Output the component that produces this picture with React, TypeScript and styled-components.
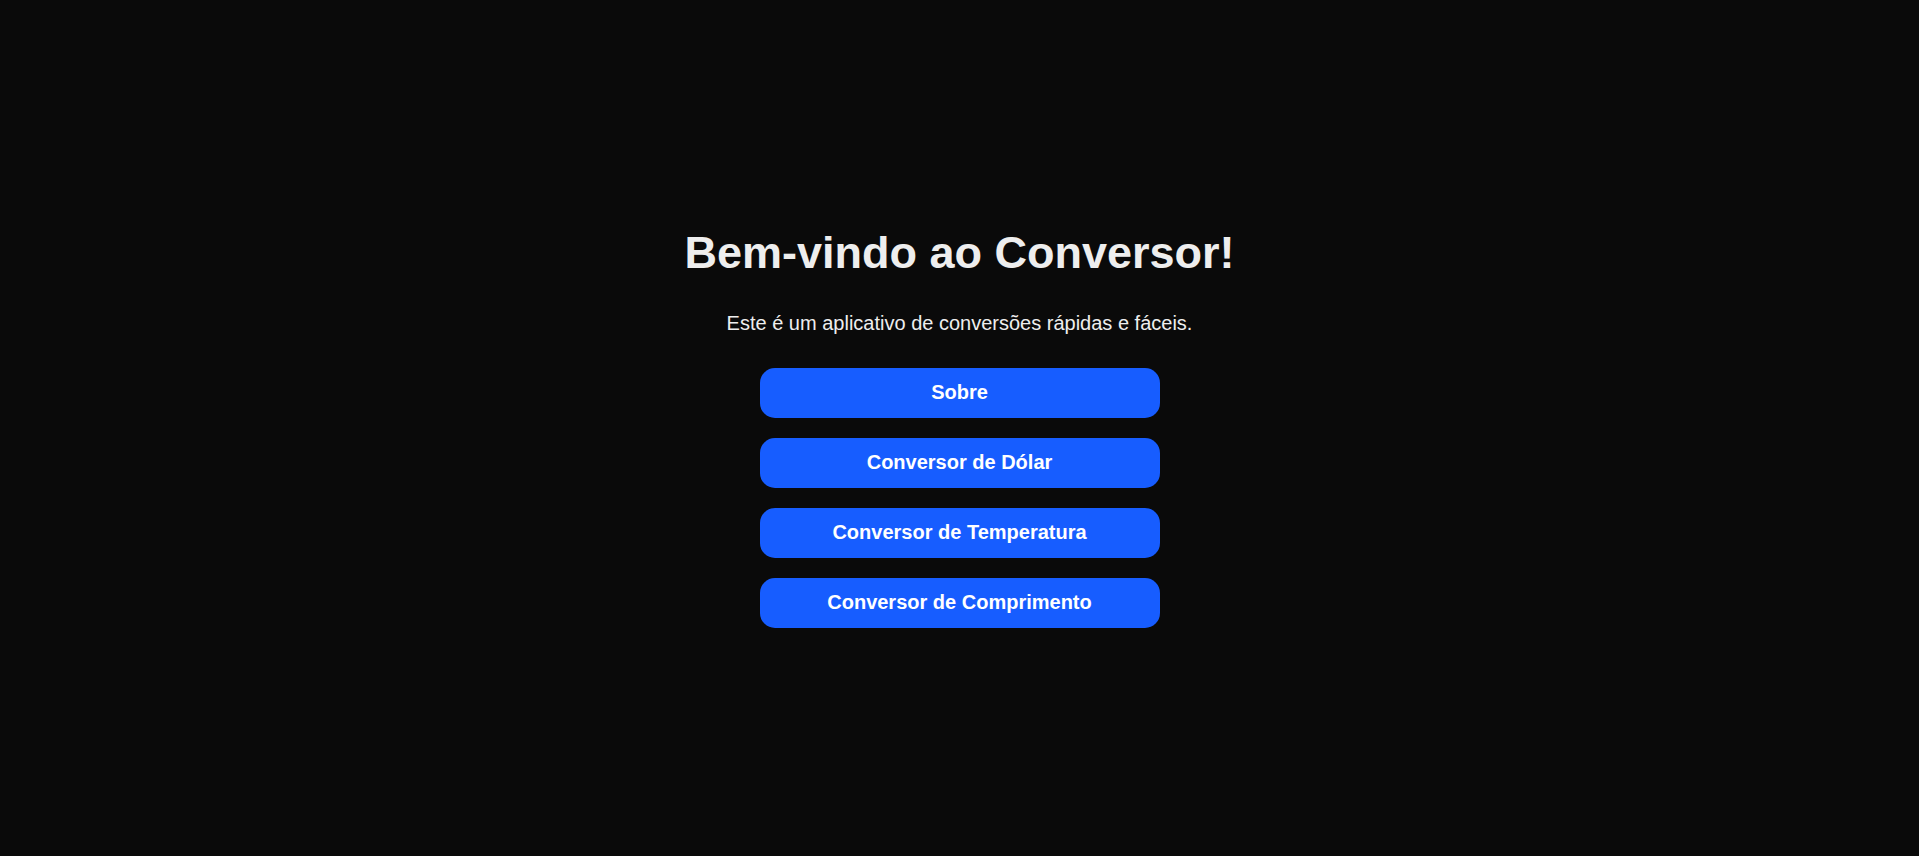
import React from "react";
import styled, { createGlobalStyle } from "styled-components";

const GlobalStyle = createGlobalStyle`
  body {
    margin: 0;
    background: #0a0a0a;
    font-family: "Liberation Sans", Arial, sans-serif;
  }
`;

const Page = styled.main`
  min-height: 100vh;
  box-sizing: border-box;
  padding-bottom: 2px;
  display: flex;
  flex-direction: column;
  align-items: center;
  justify-content: center;
  color: #eeeeee;
  text-align: center;
`;

const Title = styled.h1`
  font-size: 45px;
  font-weight: 700;
  margin: 0 0 33px;
`;

const Subtitle = styled.p`
  font-size: 20px;
  margin: 0 0 33px;
`;

const Menu = styled.nav`
  display: flex;
  flex-direction: column;
  gap: 20px;
`;

const MenuButton = styled.button`
  width: 400px;
  height: 50px;
  border: none;
  border-radius: 15px;
  background: #175dff;
  color: #ffffff;
  font-family: "Liberation Sans", Arial, sans-serif;
  font-size: 20px;
  font-weight: 700;
  cursor: pointer;

  &:hover {
    opacity: 0.85;
  }
`;

const items = [
  "Sobre",
  "Conversor de Dólar",
  "Conversor de Temperatura",
  "Conversor de Comprimento"
];

const App = () => {
  return (
    <>
      <GlobalStyle />
      <Page>
        <Title>Bem-vindo ao Conversor!</Title>
        <Subtitle>Este é um aplicativo de conversões rápidas e fáceis.</Subtitle>
        <Menu>
          {items.map(label => (
            <MenuButton key={label}>{label}</MenuButton>
          ))}
        </Menu>
      </Page>
    </>
  );
};

export default App;
